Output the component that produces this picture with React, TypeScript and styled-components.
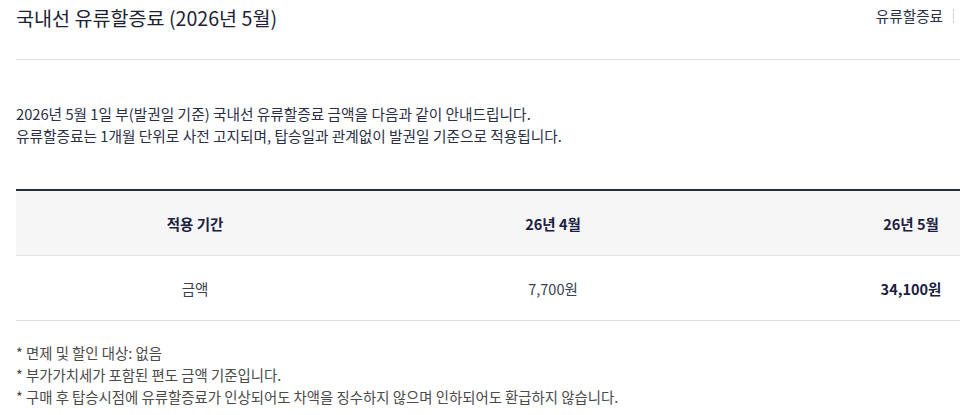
import React from 'react'
import styled, { createGlobalStyle } from 'styled-components'

const GlobalStyle = createGlobalStyle`
  html, body {
    margin: 0;
    padding: 0;
    background: #fff;
  }
  body {
    font-family: 'Noto Sans CJK KR', 'Noto Sans', sans-serif;
    color: #1d2233;
  }
`

const Viewport = styled.div`
  width: 960px;
  height: 415px;
  overflow: hidden;
`

const Page = styled.div`
  width: 1074px;
  padding: 0 16px;
`

const Header = styled.header`
  width: 944px;
  height: 59px;
  display: flex;
  align-items: flex-start;
  justify-content: space-between;
  border-bottom: 1px solid #e1e1e1;
`

const Title = styled.h1`
  margin: 4px 0 0;
  font-size: 19.6px;
  font-weight: 400;
  line-height: 28px;
  color: #1d2233;
`

const Crumbs = styled.nav`
  display: flex;
  align-items: center;
  margin-top: 6px;
  font-size: 14.6px;
  line-height: 20px;
  color: #2a2f45;
`

const Divider = styled.span`
  width: 1px;
  height: 14px;
  margin-left: 10px;
  margin-right: 6px;
  background: #d5d5d5;
`

const Intro = styled.p`
  margin: 43px 0 0;
  font-size: 14.7px;
  line-height: 22px;
  color: #2a2f45;
`

const Table = styled.div`
  margin-top: 42px;
  border-top: 2px solid #272c3b;
`

const Row = styled.div<{ $head?: boolean }>`
  display: grid;
  grid-template-columns: repeat(3, 1fr);
  height: 64px;
  align-items: center;
  background: ${p => (p.$head ? '#f6f6f6' : '#fff')};
  border-bottom: 1px solid ${p => (p.$head ? '#e4e4e4' : '#dedede')};
`

const Cell = styled.div<{ $bold?: boolean }>`
  text-align: center;
  font-size: 14.5px;
  font-weight: ${p => (p.$bold ? 700 : 400)};
  color: ${p => (p.$bold ? '#1b2040' : '#3a3f52')};
`

const Notes = styled.ul`
  list-style: none;
  margin: 21px 0 0;
  padding: 0;
  font-size: 14.4px;
  line-height: 22px;
  color: #4a4a4a;
`

export default function App() {
  return (
    <Viewport>
      <GlobalStyle />
      <Page>
        <Header>
          <Title>국내선 유류할증료 (2026년 5월)</Title>
          <Crumbs>
            유류할증료
            <Divider />
          </Crumbs>
        </Header>
        <Intro>
          2026년 5월 1일 부(발권일 기준) 국내선 유류할증료 금액을 다음과 같이 안내드립니다.
          <br />
          유류할증료는 1개월 단위로 사전 고지되며, 탑승일과 관계없이 발권일 기준으로 적용됩니다.
        </Intro>
        <Table>
          <Row $head>
            <Cell $bold>적용 기간</Cell>
            <Cell $bold>26년 4월</Cell>
            <Cell $bold>26년 5월</Cell>
          </Row>
          <Row>
            <Cell>금액</Cell>
            <Cell>7,700원</Cell>
            <Cell $bold>34,100원</Cell>
          </Row>
        </Table>
        <Notes>
          <li>* 면제 및 할인 대상: 없음</li>
          <li>* 부가가치세가 포함된 편도 금액 기준입니다.</li>
          <li>* 구매 후 탑승시점에 유류할증료가 인상되어도 차액을 징수하지 않으며 인하되어도 환급하지 않습니다.</li>
        </Notes>
      </Page>
    </Viewport>
  )
}
